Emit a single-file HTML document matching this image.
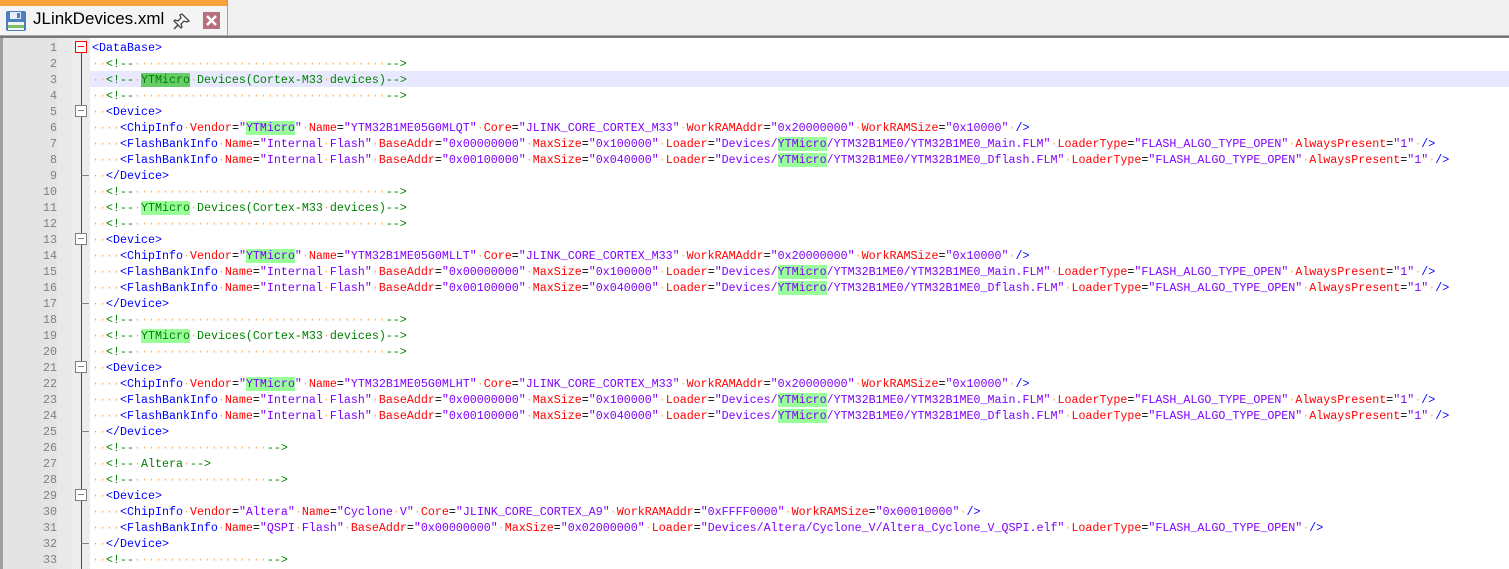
<!DOCTYPE html>
<html><head><meta charset="utf-8"><style>
body{margin:0;width:1509px;height:569px;overflow:hidden;background:#fff;position:relative;font-family:"Liberation Mono",monospace}
#bar{position:absolute;left:0;top:0;width:1509px;height:35px;background:#f0f0f0}
#tab{position:absolute;left:0;top:0;width:227px;height:35px;background:#f4f4f4;border-right:1px solid #a0a0a0}
#tab .o{position:absolute;left:0;top:0;width:227px;height:6px;background:#f9a33d}
#tab .n{position:absolute;left:33px;top:9px;font:17px "Liberation Sans",sans-serif;color:#000}
#sep{position:absolute;left:0;top:35px;width:1509px;height:3px;background:linear-gradient(#c8c8c8,#606060 60%,#909090)}
#gut{position:absolute;left:3px;top:38px;width:54px;height:531px;background:#e4e4e4}
#gut2{position:absolute;left:57px;top:38px;width:14px;height:531px;background:#e9e9e9}
#fold{position:absolute;left:71px;top:38px;width:19px;height:531px;background:repeating-conic-gradient(#f2f2f2 0 25%,#e6e6e6 0 50%) 0 0/2px 2px}
#lb{position:absolute;left:0;top:38px;width:3px;height:531px;background:#a0a0a0}
#nums{position:absolute;left:3px;top:40px;width:54px;text-align:right;font-size:11.67px;line-height:16px;color:#808080;white-space:pre}
#code{position:absolute;left:92px;top:40px;font-size:11.67px;line-height:16px;white-space:pre;color:#000}
.hl{position:absolute;left:90px;top:71px;width:1419px;height:16px;background:#e8e8ff}
.t{color:#0000ff}.a{color:#ff0000}.v{color:#8000ff}.c{color:#008000}i{font-style:normal;color:#ffb060}
.g{background:#99ff99}.G{background:#66cc66}
.vl{position:absolute;left:81px;top:53px;width:1px;height:516px;background:#ff0000}
.bx{position:absolute;left:75px;width:12px;height:12px;background:#fff;box-sizing:border-box;border:1px solid #808080}
.bx:after{content:"";position:absolute;left:2px;top:4px;width:6px;height:1px;background:#808080}
.bx.r{border-color:#ff0000}.bx.r:after{background:#ff0000}
.tk{position:absolute;left:81px;width:8px;height:1px;background:#808080}
</style></head><body>
<div id="bar"></div>
<div id="tab"><div class="o"></div>
<svg style="position:absolute;left:5px;top:10px" width="22" height="22" viewBox="0 0 22 22"><rect x="1" y="1" width="20" height="20" rx="2" fill="#4a7fc0"/><rect x="5" y="2" width="11" height="7" fill="#e8eef8"/><rect x="12" y="3" width="3" height="5" fill="#4a7fc0"/><rect x="3" y="12" width="16" height="8" fill="#f4f4f4"/><rect x="3" y="15" width="16" height="3" fill="#7cc060"/></svg>
<div class="n">JLinkDevices.xml</div>
<svg style="position:absolute;left:173px;top:12px" width="18" height="18" viewBox="0 0 18 18"><path d="M9 2l7 7-2 1-3-1-3 3 1 3-1 1-7-7 1-1 3 1 3-3-1-3z" fill="#fff" stroke="#444" stroke-width="1.3"/><path d="M5 13l-4 4" stroke="#444" stroke-width="1.5"/></svg>
<div style="position:absolute;left:203px;top:12px;width:17px;height:17px;background:#b8707c"><svg width="17" height="17"><path d="M4 4l9 9M13 4l-9 9" stroke="#fff" stroke-width="2.6"/></svg></div>
</div>
<div id="sep"></div>
<div id="lb"></div><div id="gut"></div><div id="gut2"></div><div id="fold"></div>
<div class="hl"></div>
<div class="vl"></div>
<div class="bx r" style="top:41px"></div>
<div class="bx" style="top:105px"></div><div class="tk" style="top:175px"></div>
<div class="bx" style="top:233px"></div><div class="tk" style="top:303px"></div>
<div class="bx" style="top:361px"></div><div class="tk" style="top:431px"></div>
<div class="bx" style="top:489px"></div><div class="tk" style="top:543px"></div>
<div id="nums">1
2
3
4
5
6
7
8
9
10
11
12
13
14
15
16
17
18
19
20
21
22
23
24
25
26
27
28
29
30
31
32
33</div>
<div id="code"><span class="t">&lt;DataBase&gt;</span>
<i>··</i><span class="c">&lt;!--<i>····································</i>--&gt;</span>
<i>··</i><span class="c">&lt;!--<i>·</i><span class="G">YTMicro</span><i>·</i>Devices(Cortex-M33<i>·</i>devices)--&gt;</span>
<i>··</i><span class="c">&lt;!--<i>····································</i>--&gt;</span>
<i>··</i><span class="t">&lt;Device&gt;</span>
<i>····</i><span class="t">&lt;ChipInfo</span><i>·</i><span class="a">Vendor</span>=<span class="v">"<span class="g">YTMicro</span>"</span><i>·</i><span class="a">Name</span>=<span class="v">"YTM32B1ME05G0MLQT"</span><i>·</i><span class="a">Core</span>=<span class="v">"JLINK_CORE_CORTEX_M33"</span><i>·</i><span class="a">WorkRAMAddr</span>=<span class="v">"0x20000000"</span><i>·</i><span class="a">WorkRAMSize</span>=<span class="v">"0x10000"</span><i>·</i><span class="t">/&gt;</span>
<i>····</i><span class="t">&lt;FlashBankInfo</span><i>·</i><span class="a">Name</span>=<span class="v">"Internal<i>·</i>Flash"</span><i>·</i><span class="a">BaseAddr</span>=<span class="v">"0x00000000"</span><i>·</i><span class="a">MaxSize</span>=<span class="v">"0x100000"</span><i>·</i><span class="a">Loader</span>=<span class="v">"Devices/<span class="g">YTMicro</span>/YTM32B1ME0/YTM32B1ME0_Main.FLM"</span><i>·</i><span class="a">LoaderType</span>=<span class="v">"FLASH_ALGO_TYPE_OPEN"</span><i>·</i><span class="a">AlwaysPresent</span>=<span class="v">"1"</span><i>·</i><span class="t">/&gt;</span>
<i>····</i><span class="t">&lt;FlashBankInfo</span><i>·</i><span class="a">Name</span>=<span class="v">"Internal<i>·</i>Flash"</span><i>·</i><span class="a">BaseAddr</span>=<span class="v">"0x00100000"</span><i>·</i><span class="a">MaxSize</span>=<span class="v">"0x040000"</span><i>·</i><span class="a">Loader</span>=<span class="v">"Devices/<span class="g">YTMicro</span>/YTM32B1ME0/YTM32B1ME0_Dflash.FLM"</span><i>·</i><span class="a">LoaderType</span>=<span class="v">"FLASH_ALGO_TYPE_OPEN"</span><i>·</i><span class="a">AlwaysPresent</span>=<span class="v">"1"</span><i>·</i><span class="t">/&gt;</span>
<i>··</i><span class="t">&lt;/Device&gt;</span>
<i>··</i><span class="c">&lt;!--<i>····································</i>--&gt;</span>
<i>··</i><span class="c">&lt;!--<i>·</i><span class="g">YTMicro</span><i>·</i>Devices(Cortex-M33<i>·</i>devices)--&gt;</span>
<i>··</i><span class="c">&lt;!--<i>····································</i>--&gt;</span>
<i>··</i><span class="t">&lt;Device&gt;</span>
<i>····</i><span class="t">&lt;ChipInfo</span><i>·</i><span class="a">Vendor</span>=<span class="v">"<span class="g">YTMicro</span>"</span><i>·</i><span class="a">Name</span>=<span class="v">"YTM32B1ME05G0MLLT"</span><i>·</i><span class="a">Core</span>=<span class="v">"JLINK_CORE_CORTEX_M33"</span><i>·</i><span class="a">WorkRAMAddr</span>=<span class="v">"0x20000000"</span><i>·</i><span class="a">WorkRAMSize</span>=<span class="v">"0x10000"</span><i>·</i><span class="t">/&gt;</span>
<i>····</i><span class="t">&lt;FlashBankInfo</span><i>·</i><span class="a">Name</span>=<span class="v">"Internal<i>·</i>Flash"</span><i>·</i><span class="a">BaseAddr</span>=<span class="v">"0x00000000"</span><i>·</i><span class="a">MaxSize</span>=<span class="v">"0x100000"</span><i>·</i><span class="a">Loader</span>=<span class="v">"Devices/<span class="g">YTMicro</span>/YTM32B1ME0/YTM32B1ME0_Main.FLM"</span><i>·</i><span class="a">LoaderType</span>=<span class="v">"FLASH_ALGO_TYPE_OPEN"</span><i>·</i><span class="a">AlwaysPresent</span>=<span class="v">"1"</span><i>·</i><span class="t">/&gt;</span>
<i>····</i><span class="t">&lt;FlashBankInfo</span><i>·</i><span class="a">Name</span>=<span class="v">"Internal<i>·</i>Flash"</span><i>·</i><span class="a">BaseAddr</span>=<span class="v">"0x00100000"</span><i>·</i><span class="a">MaxSize</span>=<span class="v">"0x040000"</span><i>·</i><span class="a">Loader</span>=<span class="v">"Devices/<span class="g">YTMicro</span>/YTM32B1ME0/YTM32B1ME0_Dflash.FLM"</span><i>·</i><span class="a">LoaderType</span>=<span class="v">"FLASH_ALGO_TYPE_OPEN"</span><i>·</i><span class="a">AlwaysPresent</span>=<span class="v">"1"</span><i>·</i><span class="t">/&gt;</span>
<i>··</i><span class="t">&lt;/Device&gt;</span>
<i>··</i><span class="c">&lt;!--<i>····································</i>--&gt;</span>
<i>··</i><span class="c">&lt;!--<i>·</i><span class="g">YTMicro</span><i>·</i>Devices(Cortex-M33<i>·</i>devices)--&gt;</span>
<i>··</i><span class="c">&lt;!--<i>····································</i>--&gt;</span>
<i>··</i><span class="t">&lt;Device&gt;</span>
<i>····</i><span class="t">&lt;ChipInfo</span><i>·</i><span class="a">Vendor</span>=<span class="v">"<span class="g">YTMicro</span>"</span><i>·</i><span class="a">Name</span>=<span class="v">"YTM32B1ME05G0MLHT"</span><i>·</i><span class="a">Core</span>=<span class="v">"JLINK_CORE_CORTEX_M33"</span><i>·</i><span class="a">WorkRAMAddr</span>=<span class="v">"0x20000000"</span><i>·</i><span class="a">WorkRAMSize</span>=<span class="v">"0x10000"</span><i>·</i><span class="t">/&gt;</span>
<i>····</i><span class="t">&lt;FlashBankInfo</span><i>·</i><span class="a">Name</span>=<span class="v">"Internal<i>·</i>Flash"</span><i>·</i><span class="a">BaseAddr</span>=<span class="v">"0x00000000"</span><i>·</i><span class="a">MaxSize</span>=<span class="v">"0x100000"</span><i>·</i><span class="a">Loader</span>=<span class="v">"Devices/<span class="g">YTMicro</span>/YTM32B1ME0/YTM32B1ME0_Main.FLM"</span><i>·</i><span class="a">LoaderType</span>=<span class="v">"FLASH_ALGO_TYPE_OPEN"</span><i>·</i><span class="a">AlwaysPresent</span>=<span class="v">"1"</span><i>·</i><span class="t">/&gt;</span>
<i>····</i><span class="t">&lt;FlashBankInfo</span><i>·</i><span class="a">Name</span>=<span class="v">"Internal<i>·</i>Flash"</span><i>·</i><span class="a">BaseAddr</span>=<span class="v">"0x00100000"</span><i>·</i><span class="a">MaxSize</span>=<span class="v">"0x040000"</span><i>·</i><span class="a">Loader</span>=<span class="v">"Devices/<span class="g">YTMicro</span>/YTM32B1ME0/YTM32B1ME0_Dflash.FLM"</span><i>·</i><span class="a">LoaderType</span>=<span class="v">"FLASH_ALGO_TYPE_OPEN"</span><i>·</i><span class="a">AlwaysPresent</span>=<span class="v">"1"</span><i>·</i><span class="t">/&gt;</span>
<i>··</i><span class="t">&lt;/Device&gt;</span>
<i>··</i><span class="c">&lt;!--<i>···················</i>--&gt;</span>
<i>··</i><span class="c">&lt;!--<i>·</i>Altera<i>·</i>--&gt;</span>
<i>··</i><span class="c">&lt;!--<i>···················</i>--&gt;</span>
<i>··</i><span class="t">&lt;Device&gt;</span>
<i>····</i><span class="t">&lt;ChipInfo</span><i>·</i><span class="a">Vendor</span>=<span class="v">"Altera"</span><i>·</i><span class="a">Name</span>=<span class="v">"Cyclone<i>·</i>V"</span><i>·</i><span class="a">Core</span>=<span class="v">"JLINK_CORE_CORTEX_A9"</span><i>·</i><span class="a">WorkRAMAddr</span>=<span class="v">"0xFFFF0000"</span><i>·</i><span class="a">WorkRAMSize</span>=<span class="v">"0x00010000"</span><i>·</i><span class="t">/&gt;</span>
<i>····</i><span class="t">&lt;FlashBankInfo</span><i>·</i><span class="a">Name</span>=<span class="v">"QSPI<i>·</i>Flash"</span><i>·</i><span class="a">BaseAddr</span>=<span class="v">"0x00000000"</span><i>·</i><span class="a">MaxSize</span>=<span class="v">"0x02000000"</span><i>·</i><span class="a">Loader</span>=<span class="v">"Devices/Altera/Cyclone_V/Altera_Cyclone_V_QSPI.elf"</span><i>·</i><span class="a">LoaderType</span>=<span class="v">"FLASH_ALGO_TYPE_OPEN"</span><i>·</i><span class="t">/&gt;</span>
<i>··</i><span class="t">&lt;/Device&gt;</span>
<i>··</i><span class="c">&lt;!--<i>···················</i>--&gt;</span></div>
</body></html>
